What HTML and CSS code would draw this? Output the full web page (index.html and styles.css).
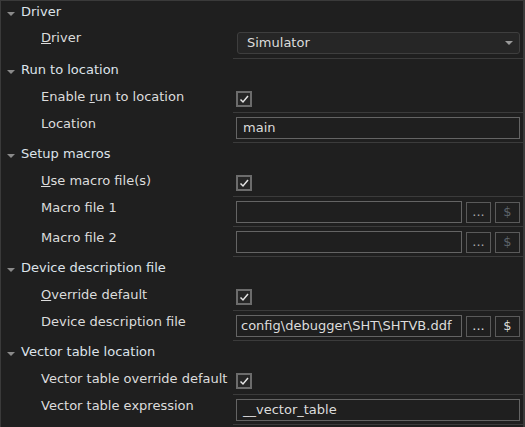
FILE: index.html
```html
<!DOCTYPE html>
<html lang="en">
<head>
	<meta charset="UTF-8">
	<title>Debugger options</title>
	<link rel="stylesheet" href="styles.css">
</head>
<body>
	<div class="props">
		<div class="group"><span class="caret"></span>Driver</div>
		<div class="row row-select">
			<div class="label"><u>D</u>river</div>
			<div class="value">
				<div class="select"><span>Simulator</span><span class="select-arrow"></span></div>
			</div>
		</div>

		<div class="group"><span class="caret"></span>Run to location</div>
		<div class="row row-check">
			<div class="label">Enable <u>r</u>un to location</div>
			<div class="value"><span class="check"><svg width="12" height="12" viewBox="0 0 12 12"><polyline points="2.5,6.5 5,9 10,3"/></svg></span></div>
		</div>
		<div class="row row-input">
			<div class="label">Location</div>
			<div class="value"><div class="input">main</div></div>
		</div>

		<div class="group"><span class="caret"></span>Setup macros</div>
		<div class="row row-check">
			<div class="label"><u>U</u>se macro file(s)</div>
			<div class="value"><span class="check"><svg width="12" height="12" viewBox="0 0 12 12"><polyline points="2.5,6.5 5,9 10,3"/></svg></span></div>
		</div>
		<div class="row row-input">
			<div class="label">Macro file 1</div>
			<div class="value">
				<div class="input"></div>
				<span class="btn dim">...</span>
				<span class="btn dim dollar">$</span>
			</div>
		</div>
		<div class="row row-input">
			<div class="label">Macro file 2</div>
			<div class="value">
				<div class="input"></div>
				<span class="btn dim">...</span>
				<span class="btn dim dollar">$</span>
			</div>
		</div>

		<div class="group"><span class="caret"></span>Device description file</div>
		<div class="row row-check">
			<div class="label"><u>O</u>verride default</div>
			<div class="value"><span class="check"><svg width="12" height="12" viewBox="0 0 12 12"><polyline points="2.5,6.5 5,9 10,3"/></svg></span></div>
		</div>
		<div class="row row-input">
			<div class="label">Device description file</div>
			<div class="value">
				<div class="input path">config\debugger\SHT\SHTVB.ddf</div>
				<span class="btn">...</span>
				<span class="btn">$</span>
			</div>
		</div>

		<div class="group"><span class="caret"></span>Vector table location</div>
		<div class="row row-check">
			<div class="label">Vector table override default</div>
			<div class="value"><span class="check"><svg width="12" height="12" viewBox="0 0 12 12"><polyline points="2.5,6.5 5,9 10,3"/></svg></span></div>
		</div>
		<div class="row row-input">
			<div class="label">Vector table expression</div>
			<div class="value"><div class="input">__vector_table</div></div>
		</div>
	</div>
</body>
</html>
```

FILE: styles.css
```css
*{
	padding: 0;
	margin: 0;
	box-sizing: border-box;
}
body{
	background-color: #1e1e1e;
	color: #dcdcdc;
	font: 13px/16px "DejaVu Sans", sans-serif;
}
.props{
	width: 525px;
	height: 427px;
	border: 1px solid #3a3a3a;
	border-right-width: 2px;
	border-bottom: 0;
	background-color: #1f1f1f;
	overflow: hidden;
}
/* group header */
.group{
	display: flex;
	height: 27px;
	padding: 3px 0 0 6px;
	color: #dde3ea;
}
.caret{
	width: 0;
	height: 0;
	border: 4px solid transparent;
	border-top: 4px solid #8a8a8a;
	border-bottom: 0;
	margin: 8px 6px 0 0;
}
/* rows */
.row{
	display: flex;
}
.label{
	width: 232px;
	padding: 3px 0 0 40px;
	white-space: nowrap;
}
.value{
	flex: 1;
	display: flex;
	padding: 0 3px 0 3px;
	border-bottom: 1px solid #3b3b3b;
}
.row-select .value{
	height: 31px;
	padding-top: 4px;
}
.row-select .label{
	padding-top: 2px;
}
.row-check .value{
	height: 27px;
	padding-top: 5px;
}
.row-input .value{
	height: 30px;
	padding-top: 4px;
}
.select{
	flex: 1;
	display: flex;
	justify-content: space-between;
	align-items: center;
	height: 22px;
	margin-left: 1px;
	padding: 0 6px 0 9px;
	background-color: #262626;
	border: 1px solid #3e3e3e;
	border-radius: 3px;
}
.select-arrow{
	width: 0;
	height: 0;
	border: 4px solid transparent;
	border-top: 4px solid #9a9a9a;
	border-bottom: 0;
}
.check{
	display: block;
	width: 16px;
	height: 16px;
	border: 2px solid #6c6c6c;
	background-color: #262626;
}
.check svg{
	display: block;
}
.check polyline{
	fill: none;
	stroke: #e4e4e4;
	stroke-width: 1.5;
}
.input{
	flex: 1;
	height: 22px;
	padding: 0 0 0 6px;
	border: 1px solid #646464;
	line-height: 20px;
	white-space: nowrap;
	overflow: hidden;
}
.input.path{
	padding-left: 4px;
}
.btn{
	width: 25px;
	height: 21px;
	margin: 1px 0 0 4px;
	border: 1px solid #5a5a5a;
	text-align: center;
	line-height: 18px;
}
.btn.dim{
	color: #a8a8a8;
}
.btn.dollar{
	color: #5c636b;
}
```
